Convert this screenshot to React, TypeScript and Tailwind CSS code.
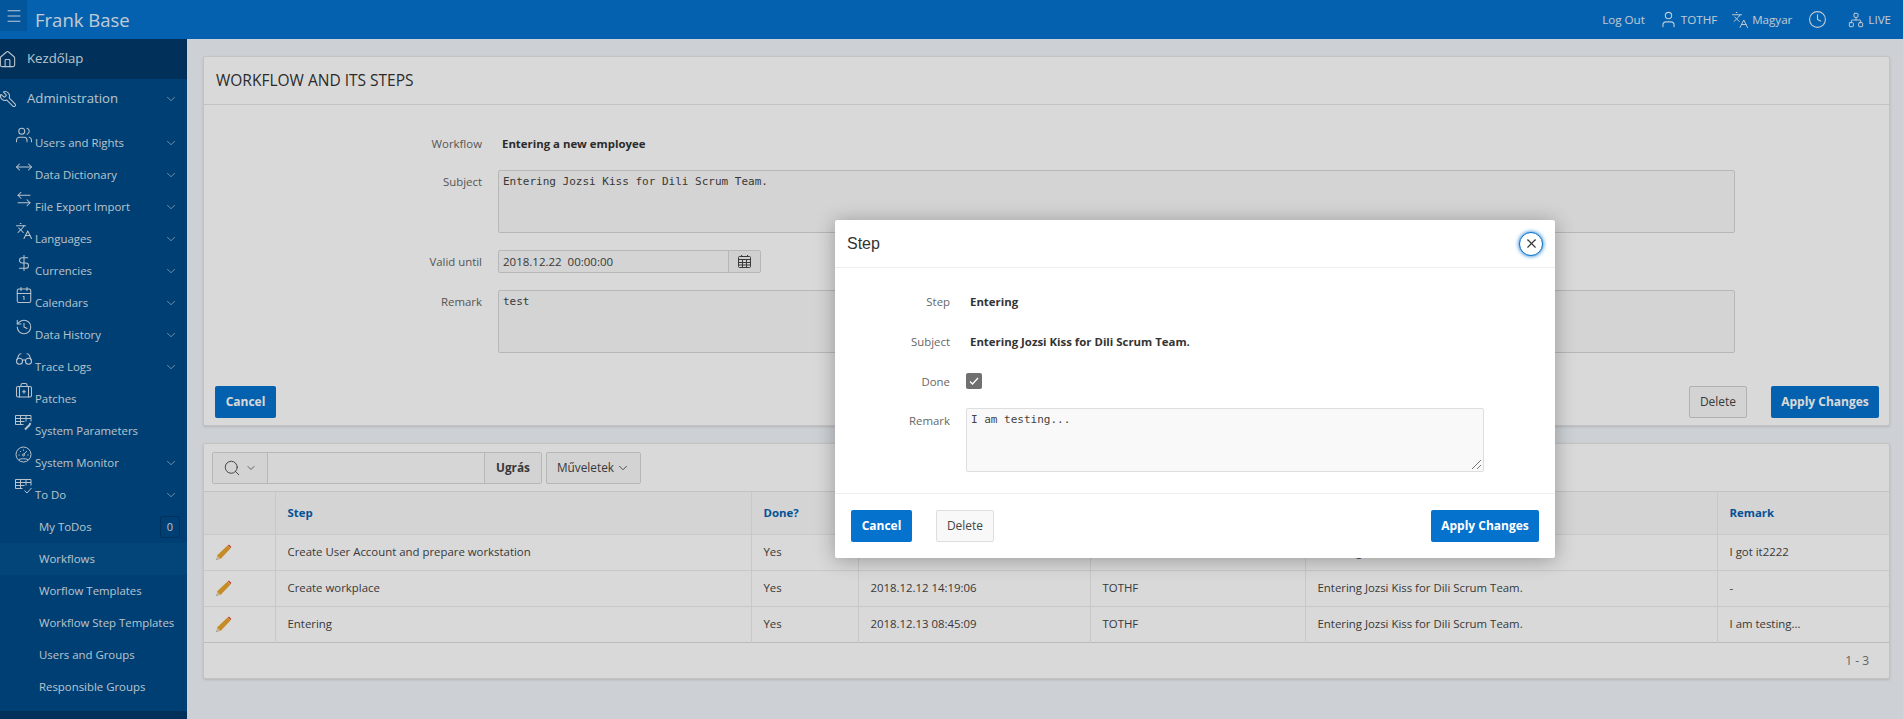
import {
  ArrowLeftRight,
  Calendar1,
  ChevronDown,
  Clock,
  Glasses,
  History,
  House,
  Languages,
  Menu,
  MoveHorizontal,
  Network,
  BriefcaseMedical,
  DollarSign,
  Search,
  User,
  Users,
  Wrench,
  X,
  type LucideIcon,
} from "lucide-react"

function TableWrench({ size = 17 }: { size?: number }) {
  return (
    <svg width={size} height={size} viewBox="0 0 17 17" fill="none" stroke="currentColor" strokeWidth="1">
      <path d="M.5 1.500h15.500v6M.5 1.500v9h8M.5 4.500h15.500M.5 7.500h9M5.500 1.500v9M11 1.500v6" />
      <path d="M15.500 9l-1 2-1 1-3.500 3.500" strokeWidth="2" />
    </svg>
  )
}

function TableCheck({ size = 17 }: { size?: number }) {
  return (
    <svg width={size} height={size} viewBox="0 0 17 17" fill="none" stroke="currentColor" strokeWidth="1">
      <path d="M.5 1.500h15.500v6M.5 1.500v9h7M.5 4.500h15.500M.5 7.500h9M5.500 1.500v9M11 1.500v6" />
      <path d="M9.500 12.500l2.500 2.500 4.500-5" />
    </svg>
  )
}

function GaugeDial({ size = 17 }: { size?: number }) {
  return (
    <svg width={size} height={size} viewBox="0 0 17 17" fill="none" stroke="currentColor" strokeWidth="1">
      <circle cx="8.500" cy="8.500" r="7.500" />
      <path d="M3.500 9h1.200M12.300 9h1.200M8.500 3.500v1.200M5 5l.8.8M12 5l-.8.8M9 8l2.500-2.500" />
      <circle cx="8.500" cy="9" r="1" />
      <path d="M4 13.500c2.500-1 6.500-1 9 0" />
    </svg>
  )
}

function CalendarGrid() {
  return (
    <svg width="15" height="15" viewBox="0 0 15 15" fill="none" stroke="#444" strokeWidth="1">
      <rect x="1.500" y="2.500" width="12" height="11" rx="1" />
      <path d="M1.500 5.500h12M1.500 8.500h12M1.500 11h12M5.500 5.500v8M9.500 5.500v8M4.500 1v2M10.500 1v2" />
    </svg>
  )
}

function PencilIcon() {
  return (
    <svg width="16" height="16" viewBox="0 0 16 16">
      <path d="M1 11.500L11.500 1.500l3 3L4.500 15z" fill="#e8a52c" />
      <path d="M11.800 1.200l1-.7 2.500 2.300-.7 1.500z" fill="#e0493a" />
      <path d="M1 11.500L4.500 15 .5 15.800z" fill="#e9cf9c" />
      <path d="M.5 15.800l1-.3-.7-.8z" fill="#333" />
    </svg>
  )
}

type NavItem = { label: string; icon: LucideIcon | typeof TableWrench; chevron: boolean; custom?: boolean }

const navItems: NavItem[] = [
  { label: "Users and Rights", icon: Users, chevron: true },
  { label: "Data Dictionary", icon: MoveHorizontal, chevron: true },
  { label: "File Export Import", icon: ArrowLeftRight, chevron: true },
  { label: "Languages", icon: Languages, chevron: true },
  { label: "Currencies", icon: DollarSign, chevron: true },
  { label: "Calendars", icon: Calendar1, chevron: true },
  { label: "Data History", icon: History, chevron: true },
  { label: "Trace Logs", icon: Glasses, chevron: true },
  { label: "Patches", icon: BriefcaseMedical, chevron: false },
  { label: "System Parameters", icon: TableWrench, chevron: false, custom: true },
  { label: "System Monitor", icon: GaugeDial, chevron: true, custom: true },
  { label: "To Do", icon: TableCheck, chevron: true, custom: true },
]

const todoItems = ["Workflows", "Worflow Templates", "Workflow Step Templates", "Users and Groups", "Responsible Groups"]

const rows = [
  ["Create User Account and prepare workstation", "Yes", "2018.12.12 14:18:30", "TOTHF", "Entering Jozsi Kiss for Dili Scrum Team.", "I got it2222"],
  ["Create workplace", "Yes", "2018.12.12 14:19:06", "TOTHF", "Entering Jozsi Kiss for Dili Scrum Team.", "-"],
  ["Entering", "Yes", "2018.12.13 08:45:09", "TOTHF", "Entering Jozsi Kiss for Dili Scrum Team.", "I am testing..."],
]

const headers = ["Step", "Done?", "Done At", "Done By", "Subject", "Remark"]

function Sidebar() {
  return (
    <aside className="flex w-[187px] shrink-0 flex-col bg-[#004a88] text-[#dbe6f0]">
      <div className="flex h-10 items-center bg-[#023a6b] text-[13.200px]">
        <House size={19} strokeWidth={1.400} className="-ml-0.5 shrink-0" />
        <span className="ml-[10px]">Kezdőlap</span>
      </div>
      <div className="flex h-10 items-center text-[13.200px]">
        <Wrench size={18} strokeWidth={1.400} className="-ml-px shrink-0 -scale-x-100" />
        <span className="ml-[10px] flex-1">Administration</span>
        <ChevronDown size={14} strokeWidth={1.500} className="mr-[9px] text-[#9db8d0]" />
      </div>
      <div className="mt-2 flex flex-col">
        {navItems.map((item) => {
          const Icon = item.icon
          return (
            <div key={item.label} className="flex h-8 items-center pl-[15px] text-[11.400px]">
              <div className="-mt-[17px] w-[17px] shrink-0">
                {item.custom ? <Icon size={17} /> : <Icon size={18} strokeWidth={1.400} />}
              </div>
              <span className="ml-[3px] flex-1 whitespace-nowrap">{item.label}</span>
              {item.chevron && <ChevronDown size={14} strokeWidth={1.500} className="mr-[9px] text-[#9db8d0]" />}
            </div>
          )
        })}
        <div className="flex h-8 items-center pl-[39px] pr-[7px] text-[11.400px]">
          <span className="flex-1">My ToDos</span>
          <span className="flex h-[22px] w-5 items-center justify-center rounded-[2px] border border-[#02396a] text-[11px]">0</span>
        </div>
        {todoItems.map((label) => (
          <div key={label} className={`flex h-8 items-center whitespace-nowrap pl-[39px] text-[11.400px] ${label === "Workflows" ? "bg-[#04528f]" : ""}`}>
            {label}
          </div>
        ))}
      </div>
      <div className="mt-2 flex-1 bg-[#023a6b]" />
    </aside>
  )
}

function Header() {
  return (
    <header className="flex h-[39px] shrink-0 items-center bg-[#0572ce] text-[#e3eef8]">
      <div className="flex h-[31px] w-[27px] self-start items-center justify-center bg-[#0565b8]">
        <Menu size={18} strokeWidth={1.400} />
      </div>
      <span className="ml-2 text-[18.500px]">Frank Base</span>
      <div className="ml-auto flex items-center text-[11.600px]">
        <span>Log Out</span>
        <User size={19} strokeWidth={1.400} className="ml-[14px]" />
        <span className="ml-[3px]">TOTHF</span>
        <Languages size={18} strokeWidth={1.300} className="ml-[14px]" />
        <span className="ml-[3px]">Magyar</span>
        <Clock size={19} strokeWidth={1.400} className="ml-[16px]" />
        <Network size={16} strokeWidth={1.500} className="ml-[21px]" />
        <span className="ml-1 mr-3">LIVE</span>
      </div>
    </header>
  )
}

function FormLabel({ children }: { children: string }) {
  return <div className="w-[278px] shrink-0 text-right text-[#666]">{children}</div>
}

function TextBox({ value }: { value: string }) {
  return (
    <div className="ml-4 h-[63px] flex-1 rounded-[2px] border border-[#d8d8d8] bg-[#f9f9f9] px-1 py-[3px] font-['DejaVu_Sans_Mono',monospace] text-[11px] text-[#444]">
      {value}
    </div>
  )
}

function WorkflowPanel() {
  return (
    <section className="flex h-[370px] flex-col rounded-[2px] border border-[#e4e4e4] bg-white shadow-sm">
      <div className="flex h-[48px] shrink-0 items-center border-b border-[#e4e4e4] pl-3 pt-px text-[15.500px] text-[#333]">WORKFLOW AND ITS STEPS</div>
      <div className="flex h-[65px] shrink-0 items-end pb-[18px] text-[11.400px]">
        <FormLabel>Workflow</FormLabel>
        <div className="ml-5 font-bold text-[#333]">Entering a new employee</div>
      </div>
      <div className="flex items-start pr-[154px] text-[11.400px]">
        <div className="pt-[3px]"><FormLabel>Subject</FormLabel></div>
        <TextBox value="Entering Jozsi Kiss for Dili Scrum Team." />
      </div>
      <div className="mt-[17px] flex items-center text-[11.400px]">
        <FormLabel>Valid until</FormLabel>
        <div className="ml-4 flex h-[23px] w-[263px] items-center rounded-[2px] border border-[#d8d8d8] bg-[#f9f9f9] pl-1 text-[11.500px] text-[#444]">
          <span className="flex-1">2018.12.22&nbsp; 00:00:00</span>
          <div className="flex h-full w-[32px] items-center justify-center border-l border-[#d8d8d8] bg-[#f5f5f5]">
            <CalendarGrid />
          </div>
        </div>
      </div>
      <div className="mt-[17px] flex items-start pr-[154px] text-[11.400px]">
        <div className="pt-[3px]"><FormLabel>Remark</FormLabel></div>
        <TextBox value="test" />
      </div>
      <div className="mt-[33px] flex items-center pl-[11px] pr-[10px] text-[12px]">
        <button className="h-8 w-[61px] rounded-[2px] bg-[#0572ce] font-bold text-white">Cancel</button>
        <button className="ml-auto h-8 w-[58px] rounded-[2px] border border-[#d0d0d0] bg-[#f8f8f8] text-[#444]">Delete</button>
        <button className="ml-6 h-8 w-[108px] rounded-[2px] bg-[#0572ce] font-bold text-white">Apply Changes</button>
      </div>
    </section>
  )
}

function StepsPanel() {
  return (
    <section className="mt-[17px] h-[236px] rounded-[2px] border border-[#e4e4e4] bg-white shadow-sm">
      <div className="flex h-[48px] items-center border-b border-[#e4e4e4] pl-2 text-[11.800px] text-[#444]">
        <div className="flex h-8 w-[330px] rounded-[2px] border border-[#d8d8d8]">
          <div className="flex w-[55px] items-center justify-center gap-1 border-r border-[#d8d8d8] bg-[#f8f8f8]">
            <Search size={18} strokeWidth={1.200} />
            <ChevronDown size={12} strokeWidth={1.500} />
          </div>
          <div className="flex-1 bg-[#fcfcfc]" />
          <div className="flex w-[57px] items-center justify-center border-l border-[#d8d8d8] bg-[#f8f8f8] font-bold">Ugrás</div>
        </div>
        <div className="ml-1 flex h-8 w-[95px] items-center justify-center gap-0.5 rounded-[2px] border border-[#d8d8d8] bg-[#f8f8f8]">
          Műveletek
          <ChevronDown size={14} strokeWidth={1.500} />
        </div>
      </div>
      <table className="w-full table-fixed border-collapse text-[11.400px] text-[#444]">
        <colgroup>
          <col className="w-[71px]" />
          <col className="w-[476px]" />
          <col className="w-[107px]" />
          <col className="w-[232px]" />
          <col className="w-[215px]" />
          <col className="w-[412px]" />
          <col />
        </colgroup>
        <thead>
          <tr className="h-[42px] border-b border-[#ececec] bg-[#f9f9f9]">
            <th className="border-r border-[#ececec]" />
            {headers.map((h) => (
              <th key={h} className="border-r border-[#ececec] pl-3 text-left font-bold text-[#0561b0] last:border-r-0">{h}</th>
            ))}
          </tr>
        </thead>
        <tbody>
          {rows.map((row) => (
            <tr key={row[0]} className="h-9 border-b border-[#ececec] last:border-[#dcdcdc]">
              <td className="border-r border-[#ececec] pl-3"><PencilIcon /></td>
              {row.map((cell, i) => (
                <td key={i} className="overflow-hidden whitespace-nowrap border-r border-[#ececec] pl-3 last:border-r-0">{cell}</td>
              ))}
            </tr>
          ))}
        </tbody>
      </table>
      <div className="flex h-[36px] items-center justify-end pr-5 text-[12px] text-[#777]">1 - 3</div>
    </section>
  )
}

function StepDialog() {
  return (
    <div className="absolute left-[835px] top-[220px] flex h-[338px] w-[720px] flex-col rounded-[2px] bg-white text-[11.400px] shadow-[0_2px_20px_rgba(0,0,0,0.3)]">
      <div className="flex h-[48px] shrink-0 items-center justify-between border-b border-[#eeeeee] pl-3 pr-3">
        <span className="font-['Liberation_Sans',sans-serif] text-[16px] text-[#333]">Step</span>
        <div className="flex h-6 w-6 items-center justify-center rounded-full border border-[#0572ce] bg-white shadow-[0_0_4px_#0572ce]">
          <X size={15} strokeWidth={1.700} className="text-[#333]" />
        </div>
      </div>
      <div className="flex h-[225px] flex-col">
        <div className="mt-[14px] flex h-10 items-center">
          <div className="w-[115px] text-right text-[#666]">Step</div>
          <div className="ml-5 font-bold text-[#333]">Entering</div>
        </div>
        <div className="flex h-10 items-center">
          <div className="w-[115px] text-right text-[#666]">Subject</div>
          <div className="ml-5 font-bold text-[#333]">Entering Jozsi Kiss for Dili Scrum Team.</div>
        </div>
        <div className="flex h-10 items-center">
          <div className="w-[115px] text-right text-[#666]">Done</div>
          <div className="-mt-0.5 ml-4 flex h-4 w-4 items-center justify-center rounded-[2px] bg-[#707070]">
            <svg width="10" height="10" viewBox="0 0 10 10" fill="none" stroke="#fff" strokeWidth="1.300"><path d="M1 5.500l2.500 2.500L9 2" /></svg>
          </div>
        </div>
        <div className="mt-[6px] flex items-start">
          <div className="w-[115px] pt-1 text-right text-[#666]">Remark</div>
          <div className="relative ml-4 h-[64px] w-[518px] rounded-[2px] border border-[#dedede] bg-[#f9f9f9] px-1 py-[3px] font-['DejaVu_Sans_Mono',monospace] text-[11px] text-[#444]">
            I am testing...
            <svg className="absolute bottom-0.5 right-0.5" width="9" height="9" viewBox="0 0 9 9" stroke="#555" strokeWidth="0.800"><path d="M0 9L9 0M5 9L9 5" /></svg>
          </div>
        </div>
      </div>
      <div className="flex flex-1 items-center border-t border-[#eeeeee] pl-4 pr-4 text-[12px]">
        <button className="h-8 w-[61px] rounded-[2px] bg-[#0572ce] font-bold text-white">Cancel</button>
        <button className="ml-6 h-8 w-[58px] rounded-[2px] border border-[#dedede] bg-[#f8f8f8] text-[#444]">Delete</button>
        <button className="ml-auto h-8 w-[108px] rounded-[2px] bg-[#0572ce] font-bold text-white">Apply Changes</button>
      </div>
    </div>
  )
}

export default function App() {
  return (
    <div className="relative flex h-[719px] w-[1903px] flex-col overflow-hidden bg-[#f1f5f9] font-['Open_Sans',sans-serif]">
      <Header />
      <div className="flex min-h-0 flex-1">
        <Sidebar />
        <main className="flex-1 pl-4 pr-[13px] pt-[17px]">
          <WorkflowPanel />
          <StepsPanel />
        </main>
      </div>
      <div className="absolute inset-0 bg-black/15" />
      <StepDialog />
    </div>
  )
}
